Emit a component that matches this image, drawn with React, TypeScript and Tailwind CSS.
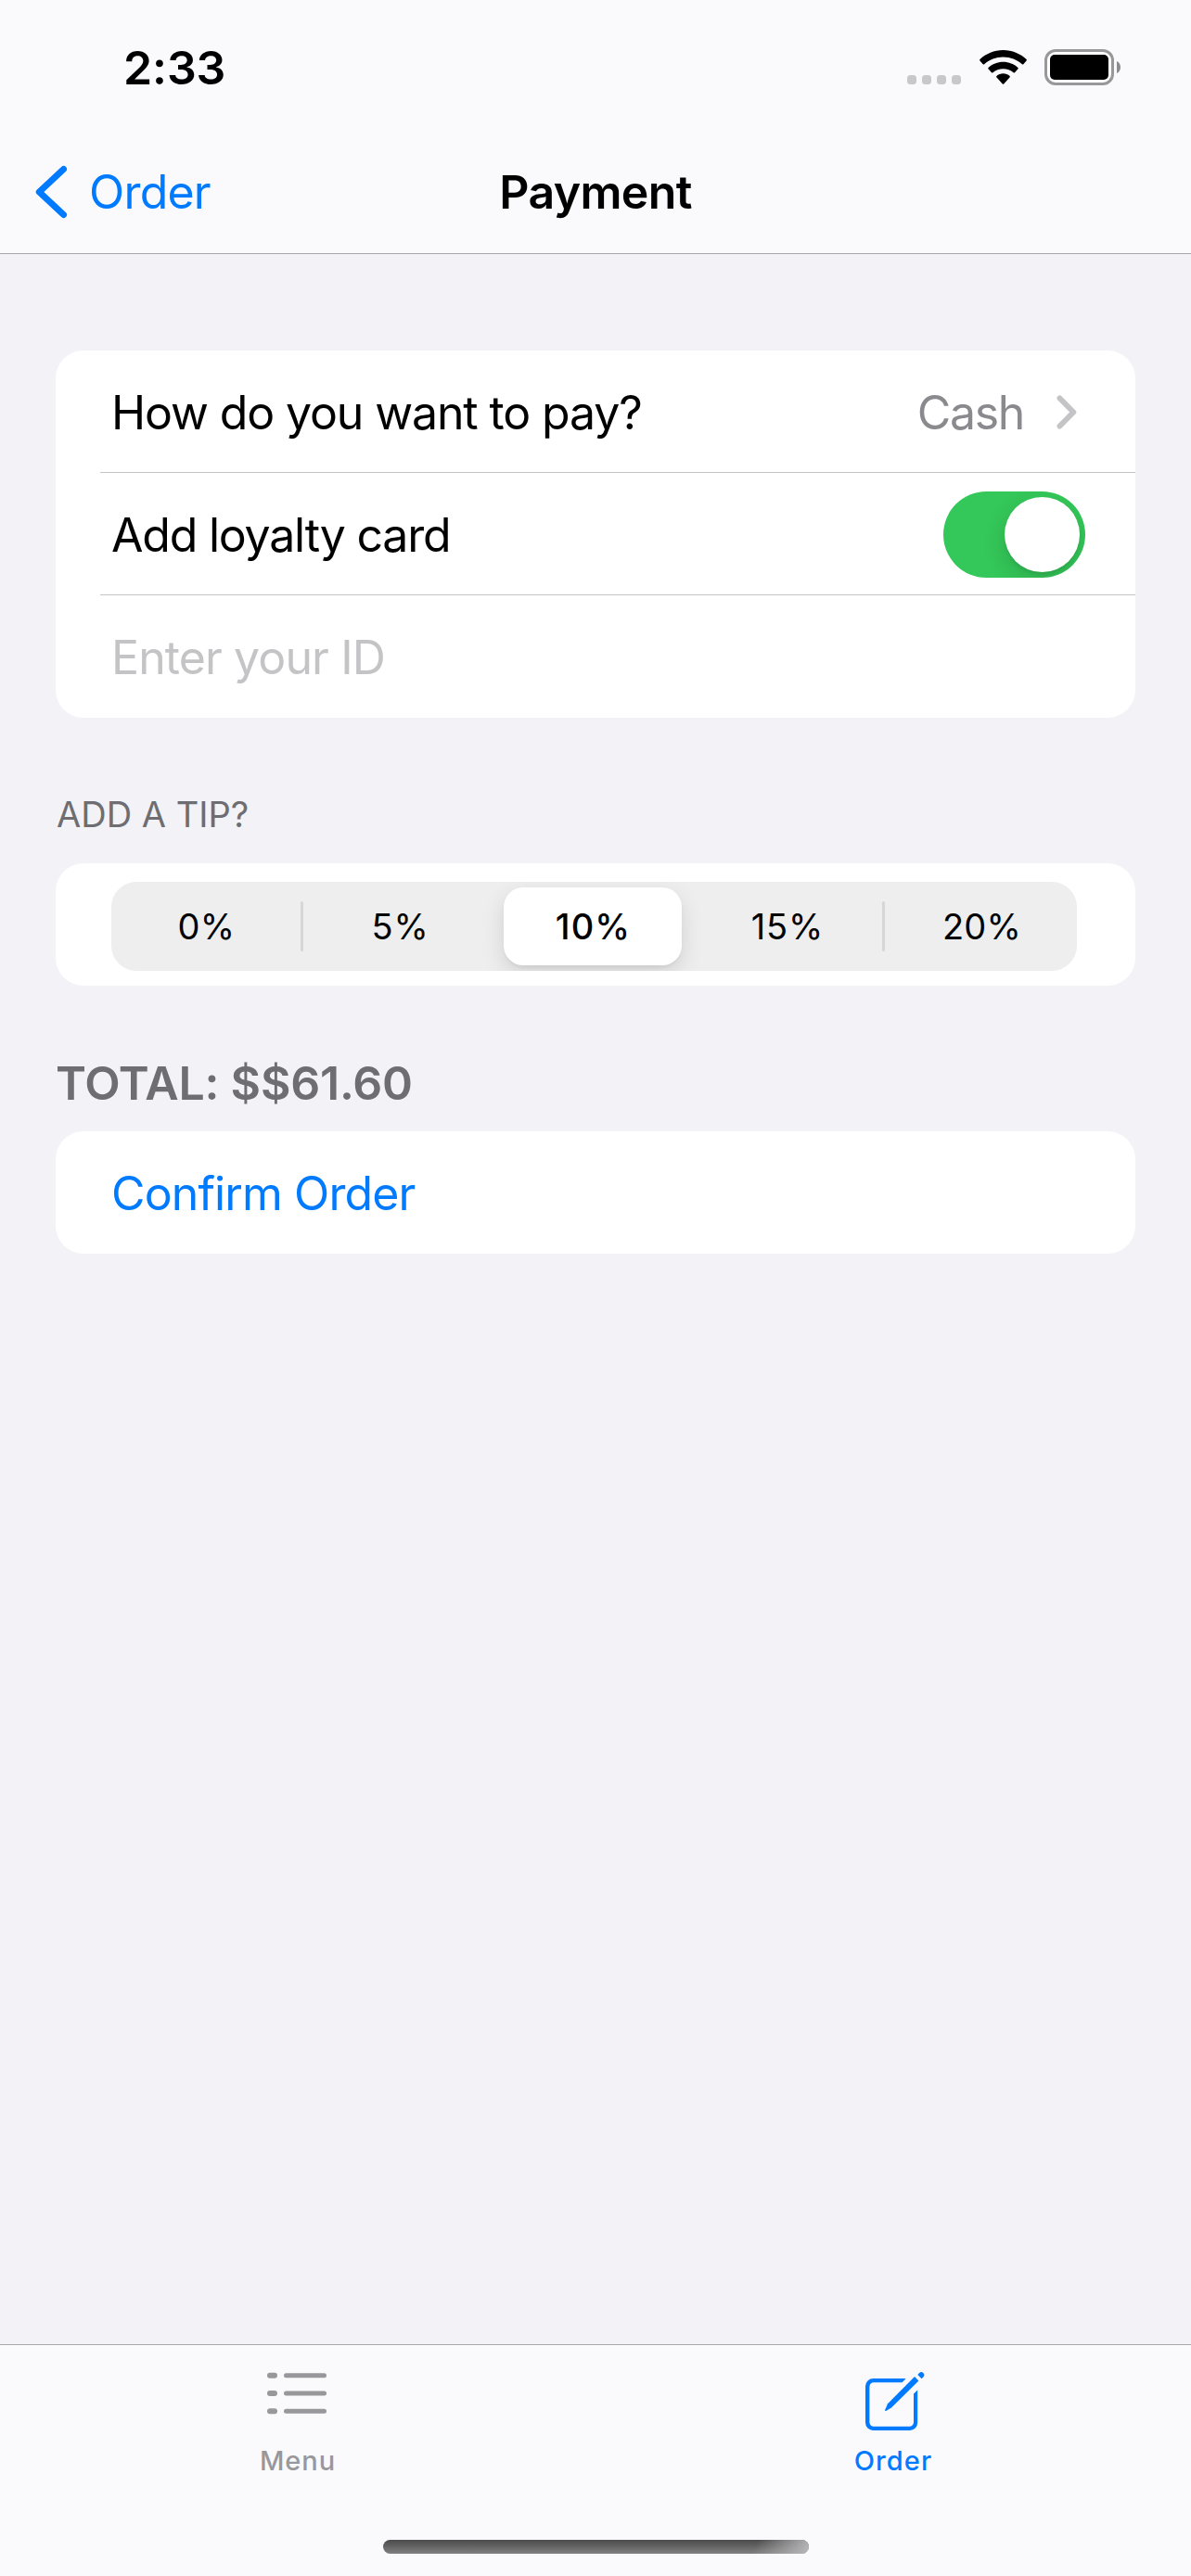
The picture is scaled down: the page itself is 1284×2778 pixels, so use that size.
import type { ReactNode } from "react";

function WifiIcon() {
  return (
    <svg className="mt-[54px] ml-[20px] h-[37px] w-[51px]" viewBox="0 0 51 37" fill="#000">
      <path d="M25.500 0C35.200 0 44 3.800 50.600 10.100c.4.400.4 1 0 1.400l-3.300 3.700c-.4.400-1 .4-1.400 0C40.500 10.200 33.400 7.400 25.500 7.400S10.500 10.200 5.100 15.200c-.4.400-1 .4-1.400 0L.4 11.500c-.4-.4-.4-1 0-1.400C7 3.800 15.800 0 25.500 0z" />
      <path d="M25.500 12.800c6.100 0 11.700 2.300 15.900 6.100.5.400.5 1 .1 1.400l-3.500 3.900c-.4.400-1 .4-1.400.1-3-2.600-6.900-4.100-11.100-4.100s-8.100 1.500-11.100 4.100c-.4.300-1 .3-1.400-.1l-3.500-3.900c-.4-.4-.4-1 .1-1.400 4.200-3.800 9.800-6.100 15.900-6.100z" />
      <path d="M25.500 25.200c2.700 0 5.200 1 7.100 2.700.4.400.4 1 .1 1.400l-6.500 7.200c-.4.400-1 .4-1.400 0l-6.500-7.200c-.4-.4-.3-1 .1-1.400 1.900-1.700 4.400-2.700 7.100-2.700z" />
    </svg>
  );
}

function StatusBar() {
  return (
    <div className="flex h-[141px] justify-between pr-[76px] pl-[133px]">
      <div className="pt-[43px] text-[50px] leading-[60px] font-semibold tracking-[-0.1px]">2:33</div>
      <div className="flex">
        <div className="mt-[81px] flex h-[10px] gap-[6px]">
          {[0, 1, 2, 3].map((dot) => (
            <span key={dot} className="h-[10px] w-[10px] rounded-[3.500px] bg-[#c8c8ca]" />
          ))}
        </div>
        <WifiIcon />
        <div className="mt-[53px] ml-[19px] h-[39px] w-[75px] rounded-[12px] border-[3px] border-[#98989a] bg-white p-[3px]">
          <div className="h-full w-full rounded-[5px] bg-black" />
        </div>
        <svg className="mt-[66px] ml-[3px] h-[13px] w-[4px]" viewBox="0 0 4 13" fill="#8c8c8e">
          <path d="M0 0C2.500 1.200 4 3.600 4 6.500S2.500 11.800 0 13z" />
        </svg>
      </div>
    </div>
  );
}

function NavBar() {
  return (
    <div className="grid h-[132px] grid-cols-3 items-center text-[50px] leading-[60px]">
      <div className="flex items-center pl-[38px] text-[#007aff]">
        <svg className="h-[58px] w-[35px]" viewBox="0 0 35 58" fill="none" stroke="#007aff" strokeWidth="7" strokeLinecap="round" strokeLinejoin="round">
          <path d="M30.500 4.500L4.300 29l26.200 24.500" />
        </svg>
        <span className="ml-[23px] tracking-[-0.800px]">Order</span>
      </div>
      <div className="text-center font-semibold tracking-[-0.630px]">Payment</div>
    </div>
  );
}

function Card({ children }: { children: ReactNode }) {
  return <div className="overflow-hidden rounded-[30px] bg-white">{children}</div>;
}

function Separator() {
  return <div className="-mt-px ml-[48px] h-px bg-[#c6c6c8]" />;
}

function Toggle() {
  return (
    <div className="flex h-[93px] w-[153px] items-center justify-end overflow-hidden rounded-full bg-[#34c759] p-[6px]">
      <div className="h-[81px] w-[81px] rounded-full bg-white shadow-[0_9px_24px_rgba(0,0,0,0.15),0_3px_3px_rgba(0,0,0,0.06)]" />
    </div>
  );
}

const tips = [
  { label: "0%", divider: true, text: "pl-[2px] tracking-[0.300px]" },
  { label: "5%", divider: false, text: "pl-[2px] tracking-[0.800px]" },
  { label: "10%", divider: false, text: "pl-[2px] tracking-[1.200px]" },
  { label: "15%", divider: true, text: "pl-px tracking-[0.900px]" },
  { label: "20%", divider: false, text: "pl-[2px] tracking-[0.200px]" },
];

function TipPicker({ selected }: { selected: string }) {
  return (
    <div className="mx-auto h-[96px] w-[1041px] overflow-hidden rounded-[27px] bg-[#eeeeee]">
      <div className="-ml-[3px] grid h-full w-[1045px] grid-cols-5 text-[38px] leading-[46px]">
        {tips.map(({ label, divider, text }) => (
          <div key={label} className="relative flex items-center justify-center">
            {label === selected ? (
              <div className="mr-[2px] flex h-[84px] w-[192px] items-center justify-center rounded-[21px] bg-white font-medium shadow-[0_9px_24px_rgba(0,0,0,0.12),0_3px_3px_rgba(0,0,0,0.04)]">
                <span className={text}>{label}</span>
              </div>
            ) : (
              <span className={text}>{label}</span>
            )}
            {divider && <span className="absolute top-[21px] -right-px h-[54px] w-[3px] rounded-full bg-[#d6d6d6]" />}
          </div>
        ))}
      </div>
    </div>
  );
}

function MenuIcon() {
  return (
    <svg className="h-[46px] w-[64px]" viewBox="0 0 64 46" fill="#98989c">
      {[0, 19.300, 38.600].map((y) => (
        <g key={y}>
          <rect x="0" y={y + 0.700} width="11" height="6" rx="3" />
          <rect x="18" y={y + 1.200} width="46" height="5" rx="2.500" />
        </g>
      ))}
    </svg>
  );
}

function ComposeIcon() {
  return (
    <svg className="h-[64px] w-[64px]" viewBox="0 0 64 64" fill="#007aff">
      <path d="M43.700 7L39.500 11.200H9A4.600 4.600 0 0 0 4.400 15.800V54.200A4.600 4.600 0 0 0 9 58.800H47.400A4.600 4.600 0 0 0 52 54.200V23.600L56.200 19.400V54.600A8.400 8.400 0 0 1 47.800 63H8.400A8.400 8.400 0 0 1 0 54.600V15.400A8.400 8.400 0 0 1 8.400 7Z" />
      <path d="M53 5L57.400 9.400L28 38.600L22.200 41.900Q20.800 42.200 21.100 40.900L24 34.200Z" />
      <path d="M56.300 3.100L58.100 1.100A3.100 3.100 0 0 1 62.400 1.100A3.200 3.200 0 0 1 62.500 5.300L60.600 7.200Z" />
    </svg>
  );
}

export default function App() {
  return (
    <div className="flex h-[2778px] w-[1284px] flex-col bg-[#f2f2f7] font-['Inter',sans-serif] text-black">
      <header className="h-[274px] border-b border-[#a7a7ab] bg-[#fafafc]">
        <StatusBar />
        <NavBar />
      </header>

      <main className="flex-1 px-[60px] pt-[104px] text-[50px] leading-[60px]">
        <Card>
          <div className="flex h-[132px] items-center pt-[2px] pr-[63px] pl-[60px]">
            <span className="tracking-[-1.130px]">How do you want to pay?</span>
            <span className="ml-auto tracking-[-1.330px] text-[#8a8a8e]">Cash</span>
            <svg className="-mt-px ml-[35px] h-[37px] w-[22px]" viewBox="0 0 22 37" fill="none" stroke="#c4c4c6" strokeWidth="6" strokeLinecap="round" strokeLinejoin="round">
              <path d="M3.500 3.500L18.300 18.500L3.500 33.500" />
            </svg>
          </div>
          <Separator />
          <div className="flex h-[132px] items-center justify-between pr-[54px] pl-[60px]">
            <span className="pt-[2px] tracking-[-1.220px]">Add loyalty card</span>
            <Toggle />
          </div>
          <Separator />
          <div className="flex h-[132px] items-center pt-[2px] pl-[60px]">
            <span className="tracking-[-0.900px] text-[#c4c4c6]">Enter your ID</span>
          </div>
        </Card>

        <h2 className="mt-[81px] pl-[1px] text-[38px] leading-[46px] text-[#6d6d72]">ADD A TIP?</h2>
        <div className="mt-[30px]">
          <Card>
            <div className="pt-[20px] pb-[16px] pr-[3px]">
              <TipPicker selected="10%" />
            </div>
          </Card>
        </div>

        <h2 className="mt-[75px] font-semibold tracking-[-0.220px] text-[#6d6d72]">TOTAL: $$61.60</h2>
        <div className="mt-[22px]">
          <Card>
            <button className="flex h-[132px] w-full items-center pt-[2px] pl-[60px] tracking-[-0.880px] text-[#007aff]">Confirm Order</button>
          </Card>
        </div>
      </main>

      <footer className="flex h-[250px] flex-col items-center border-t border-[#a7a7ab] bg-[#fafafc]">
        <nav className="grid h-[210px] w-full grid-cols-2 text-[29px] leading-[36px] font-medium">
          <div className="flex flex-col items-center pt-[29px] text-[#98989c]">
            <div className="pr-[2px]">
              <MenuIcon />
            </div>
            <span className="mt-[32px] tracking-[0.900px]">Menu</span>
          </div>
          <div className="flex flex-col items-center pt-[29px] text-[#007aff]">
            <div className="pl-[3px]">
              <ComposeIcon />
            </div>
            <span className="mt-[14px] tracking-[1.100px]">Order</span>
          </div>
        </nav>
        <div className="h-[15px] w-[459px] overflow-hidden rounded-full bg-linear-to-b from-[#4b4b4c] to-[#808080]">
          <div className="ml-auto h-full w-[70px] bg-linear-[110deg] from-transparent from-20% to-[#b8b8ba]" />
        </div>
      </footer>
    </div>
  );
}
